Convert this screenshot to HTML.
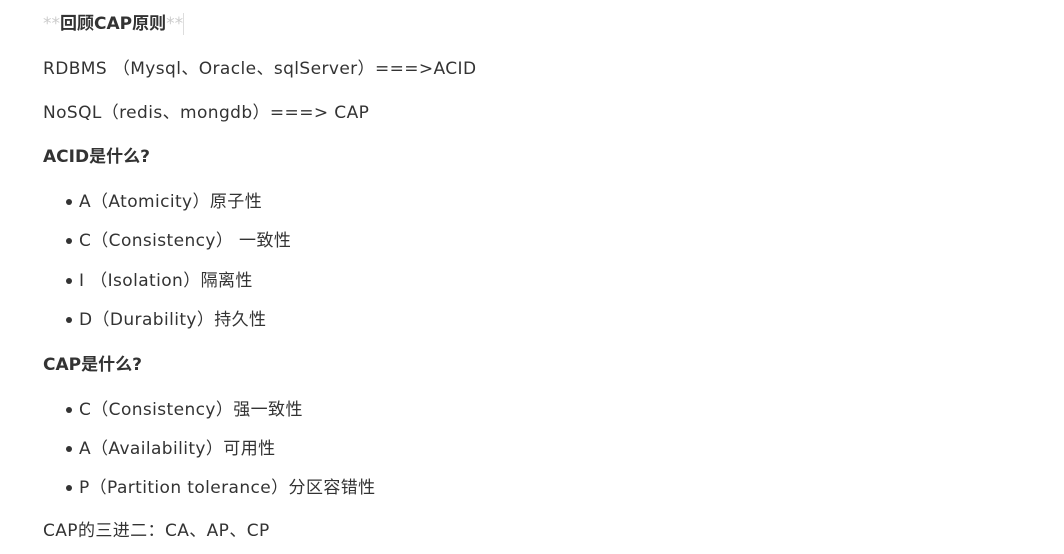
<!DOCTYPE html>
<html><head><meta charset="utf-8"><style>
body{margin:0;width:1064px;height:554px;background:#fff;overflow:hidden;position:relative;font-family:"DejaVu Sans","Noto Sans CJK SC",sans-serif;color:#333;font-size:17px;letter-spacing:0.4px}
.l{position:absolute;left:43px;height:24px;line-height:24px;white-space:nowrap}
.b{font-weight:bold;font-size:17px;letter-spacing:0}
.li{left:79px}
.li:before{content:"";position:absolute;left:-13px;top:9px;width:6px;height:6px;border-radius:50%;background:#333}
.g{color:#ccc;font-weight:normal}
</style></head><body>
<div class="l b" style="top:12px"><span class="g">**</span>回顾CAP原则<span class="g">**</span><span style="display:inline-block;width:1px;height:22px;background:#ddd;vertical-align:middle"></span></div>
<div class="l" style="top:57px">RDBMS （Mysql、Oracle、sqlServer）===&gt;ACID</div>
<div class="l" style="top:101px">NoSQL（redis、mongdb）===&gt; CAP</div>
<div class="l b" style="top:145px">ACID是什么?</div>
<div class="l li" style="top:190px">A（Atomicity）原子性</div>
<div class="l li" style="top:229px">C（Consistency） 一致性</div>
<div class="l li" style="top:269px">I （Isolation）隔离性</div>
<div class="l li" style="top:308px">D（Durability）持久性</div>
<div class="l b" style="top:353px">CAP是什么?</div>
<div class="l li" style="top:398px">C（Consistency）强一致性</div>
<div class="l li" style="top:437px">A（Availability）可用性</div>
<div class="l li" style="top:476px">P（Partition tolerance）分区容错性</div>
<div class="l" style="top:519px">CAP的三进二：CA、AP、CP</div>
</body></html>
